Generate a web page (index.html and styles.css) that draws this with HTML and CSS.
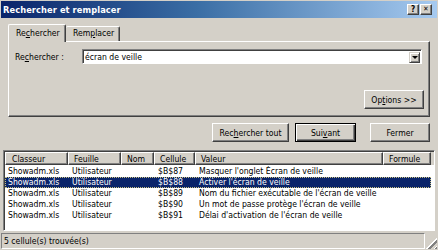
FILE: index.html
```html
<!DOCTYPE html>
<html lang="fr">
<head>
    <meta charset="UTF-8">
    <title>Rechercher et remplacer</title>
    <link rel="stylesheet" href="styles.css">
</head>
<body>
    <div class="window">
        <div class="titlebar">
            <span class="title">Rechercher et remplacer</span>
            <div class="caption-buttons">
                <span class="cap-btn">?</span>
                <span class="cap-btn close">&#x2715;</span>
            </div>
        </div>

        <div class="tabs">
            <div class="tab active">Re<u>c</u>hercher</div>
            <div class="tab">Rem<u>p</u>lacer</div>
        </div>
        <div class="panel">
            <div class="find-row">
                <label class="find-label">Re<u>c</u>hercher :</label>
                <div class="combo">
                    <span class="combo-text">écran de veille</span>
                    <span class="combo-drop"><span class="arrow"></span></span>
                </div>
            </div>
            <div class="options-row">
                <button class="btn btn-options">Op<u>t</u>ions &gt;&gt;</button>
            </div>
        </div>

        <div class="actions">
            <button class="btn btn-all">Rec<u>h</u>ercher tout</button>
            <button class="btn btn-default">Sui<u>v</u>ant</button>
            <button class="btn btn-close">Fermer</button>
        </div>

        <div class="results">
            <div class="list-head">
                <div class="col c-book">Classeur</div>
                <div class="col c-sheet">Feuille</div>
                <div class="col c-name">Nom</div>
                <div class="col c-cell">Cellule</div>
                <div class="col c-value">Valeur</div>
                <div class="col c-formula">Formule</div>
            </div>
            <div class="list-body" id="listBody">
                <!-- rows are added by script below -->
            </div>
        </div>

        <div class="status">
            <span class="status-text">5 cellule(s) trouvée(s)</span>
            <span class="grip"></span>
        </div>
    </div>

    <script>
        const results = [
            ['Showadm.xls', 'Utilisateur', '', '$B$87', 'Masquer l\'onglet Écran de veille', ''],
            ['Showadm.xls', 'Utilisateur', '', '$B$88', 'Activer l\'écran de veille', ''],
            ['Showadm.xls', 'Utilisateur', '', '$B$89', 'Nom du fichier exécutable de l\'écran de veille', ''],
            ['Showadm.xls', 'Utilisateur', '', '$B$90', 'Un mot de passe protège l\'écran de veille', ''],
            ['Showadm.xls', 'Utilisateur', '', '$B$91', 'Délai d\'activation de l\'écran de veille', '']
        ];
        const colClasses = ['c-book', 'c-sheet', 'c-name', 'c-cell', 'c-value', 'c-formula'];
        const selectedIndex = 1;

        const listBody = document.getElementById('listBody');
        results.forEach((item, i) => {
            const row = document.createElement('div');
            row.className = 'row' + (i === selectedIndex ? ' selected' : '');
            item.forEach((text, c) => {
                const cell = document.createElement('div');
                cell.className = 'cell ' + colClasses[c];
                cell.textContent = text;
                row.appendChild(cell);
            });
            listBody.appendChild(row);
        });
    </script>
</body>
</html>
```

FILE: styles.css
```css
body {
    margin: 0;
    padding: 0;
    background: #d4d0c8;
    font-family: Tahoma, 'DejaVu Sans Condensed', 'Liberation Sans', sans-serif;
    font-size: 8.6px;
    color: #000;
}
u {
    text-decoration: underline;
    text-underline-offset: 1px;
}
.window {
    width: 438px;
    height: 250px;
    box-sizing: border-box;
    padding: 1px;
    background: #d4d0c8;
    display: flex;
    flex-direction: column;
    overflow: hidden;
}
.titlebar {
    height: 17px;
    flex-shrink: 0;
    background: linear-gradient(90deg, #0a246a 0%, #3a6ea5 45%, #a6caf0 100%);
    display: flex;
    align-items: center;
    justify-content: space-between;
    padding: 0 5px 0 2px;
}
.title {
    color: #fff;
    font-weight: bold;
    font-size: 9.2px;
    letter-spacing: 0.1px;
}
.caption-buttons {
    display: flex;
    gap: 1px;
}
.cap-btn {
    width: 12px;
    height: 11px;
    box-sizing: border-box;
    background: #d4d0c8;
    border-top: 1px solid #fff;
    border-left: 1px solid #fff;
    border-right: 1px solid #404040;
    border-bottom: 1px solid #404040;
    box-shadow: inset -1px -1px 0 #808080;
    font-size: 8px;
    font-weight: bold;
    line-height: 9px;
    text-align: center;
    color: #000;
}
.cap-btn.close {
    font-size: 7px;
}

/* tabs */
.tabs {
    display: flex;
    height: 17px;
    margin: 6px 0 0 7px;
    position: relative;
    z-index: 1;
}
.tab {
    box-sizing: border-box;
    height: 15px;
    margin-top: 2px;
    padding: 0 6px;
    border-top: 1px solid #fff;
    border-left: 1px solid #fff;
    border-right: 1px solid #404040;
    box-shadow: inset -1px 0 0 #808080;
    border-radius: 2px 2px 0 0;
    line-height: 13px;
}
.tab.active {
    height: 18px;
    margin-top: 0;
    width: 58px;
    padding: 0 0 0 7px;
    background: #d4d0c8;
    line-height: 16px;
}
.tab:not(.active) {
    width: 54px;
    padding-left: 7px;
    border-left: none;
}

.panel {
    box-sizing: border-box;
    width: 422px;
    height: 76px;
    margin-left: 7px;
    border-top: 1px solid #fff;
    border-left: 1px solid #fff;
    border-right: 1px solid #404040;
    border-bottom: 1px solid #404040;
    box-shadow: inset -1px -1px 0 #808080;
    padding: 7px 6px 0 6px;
}
.find-row {
    display: flex;
    align-items: center;
}
.find-label {
    width: 67px;
    flex-shrink: 0;
}
.combo {
    width: 340px;
    height: 15px;
    box-sizing: border-box;
    background: #fff;
    border-top: 1px solid #808080;
    border-left: 1px solid #808080;
    border-right: 1px solid #fff;
    border-bottom: 1px solid #fff;
    box-shadow: inset 1px 1px 0 #404040;
    display: flex;
    align-items: center;
    justify-content: space-between;
    padding: 0 1px 0 2px;
}
.combo-drop {
    width: 11px;
    height: 11px;
    box-sizing: border-box;
    background: #d4d0c8;
    border-top: 1px solid #d4d0c8;
    border-left: 1px solid #d4d0c8;
    border-right: 1px solid #404040;
    border-bottom: 1px solid #404040;
    box-shadow: inset 1px 1px 0 #fff, inset -1px -1px 0 #808080;
    display: flex;
    align-items: center;
    justify-content: center;
    margin-top: 1px;
}
.arrow {
    width: 0;
    height: 0;
    border-left: 3px solid transparent;
    border-right: 3px solid transparent;
    border-top: 3px solid #000;
}
.options-row {
    display: flex;
    justify-content: flex-end;
    margin-top: 26px;
    margin-right: -1px;
}

/* buttons */
.btn {
    font-family: inherit;
    font-size: inherit;
    color: #000;
    background: #d4d0c8;
    box-sizing: border-box;
    height: 19px;
    padding: 0;
    border-top: 1px solid #fff;
    border-left: 1px solid #fff;
    border-right: 1px solid #404040;
    border-bottom: 1px solid #404040;
    box-shadow: inset -1px -1px 0 #808080;
    border-radius: 0;
    cursor: pointer;
}
.btn-options {
    width: 60px;
}
.actions {
    display: flex;
    justify-content: flex-end;
    margin: 6px 7px 0 0;
}
.btn-all {
    width: 77px;
}
.btn-default {
    width: 61px;
    margin-left: 6px;
    border: 1px solid #000;
    box-shadow: inset 1px 1px 0 #fff, inset -1px -1px 0 #404040, inset -2px -2px 0 #808080;
}
.btn-close {
    width: 60px;
    margin-left: 14px;
}

/* results list */
.results {
    box-sizing: border-box;
    width: 432px;
    height: 81px;
    margin: 8px 0 0 2px;
    background: #fff;
    border-top: 1px solid #808080;
    border-left: 1px solid #808080;
    border-right: 1px solid #fff;
    border-bottom: 1px solid #fff;
    box-shadow: inset 1px 1px 0 #404040;
    padding: 1px 0 0 1px;
}
.list-head {
    display: flex;
    height: 13px;
    background: #d4d0c8;
}
.col {
    box-sizing: border-box;
    height: 13px;
    padding-left: 5px;
    line-height: 12px;
    border-top: 1px solid #fff;
    border-left: 1px solid #fff;
    border-right: 1px solid #404040;
    border-bottom: 1px solid #404040;
    box-shadow: inset -1px -1px 0 #808080;
    white-space: nowrap;
    overflow: hidden;
}
.list-head .c-book {
    padding-left: 6px;
}
.c-book { width: 63px; }
.c-sheet { width: 53px; }
.c-name { width: 33px; }
.c-cell { width: 41px; }
.c-value { width: 188px; }
.c-formula { width: 48px; }
.list-body {
    padding-top: 1px;
}
.row {
    display: flex;
    height: 11px;
    line-height: 10px;
    width: 426px;
}
.cell {
    box-sizing: border-box;
    padding-left: 4px;
    white-space: nowrap;
    overflow: hidden;
}
.row .c-book {
    padding-left: 3px;
}
.row.selected {
    background: #0a246a;
    color: #fff;
    outline: 1px dotted #c8c080;
    outline-offset: -1px;
}

/* status bar */
.status {
    margin-top: 1px;
    flex: 1;
    display: flex;
    align-items: stretch;
    padding: 1px 0 0 0;
}
.status-text {
    flex: 1;
    box-sizing: border-box;
    border-top: 1px solid #808080;
    border-left: 1px solid #808080;
    border-right: 1px solid #fff;
    border-bottom: 1px solid #fff;
    padding-left: 2px;
    line-height: 14px;
}
.grip {
    width: 12px;
    background:
        repeating-linear-gradient(135deg, transparent 0 2px, #fff 2px 3px, #808080 3px 5px);
    -webkit-mask: linear-gradient(135deg, transparent 50%, #000 50%);
    mask: linear-gradient(135deg, transparent 50%, #000 50%);
}
```
